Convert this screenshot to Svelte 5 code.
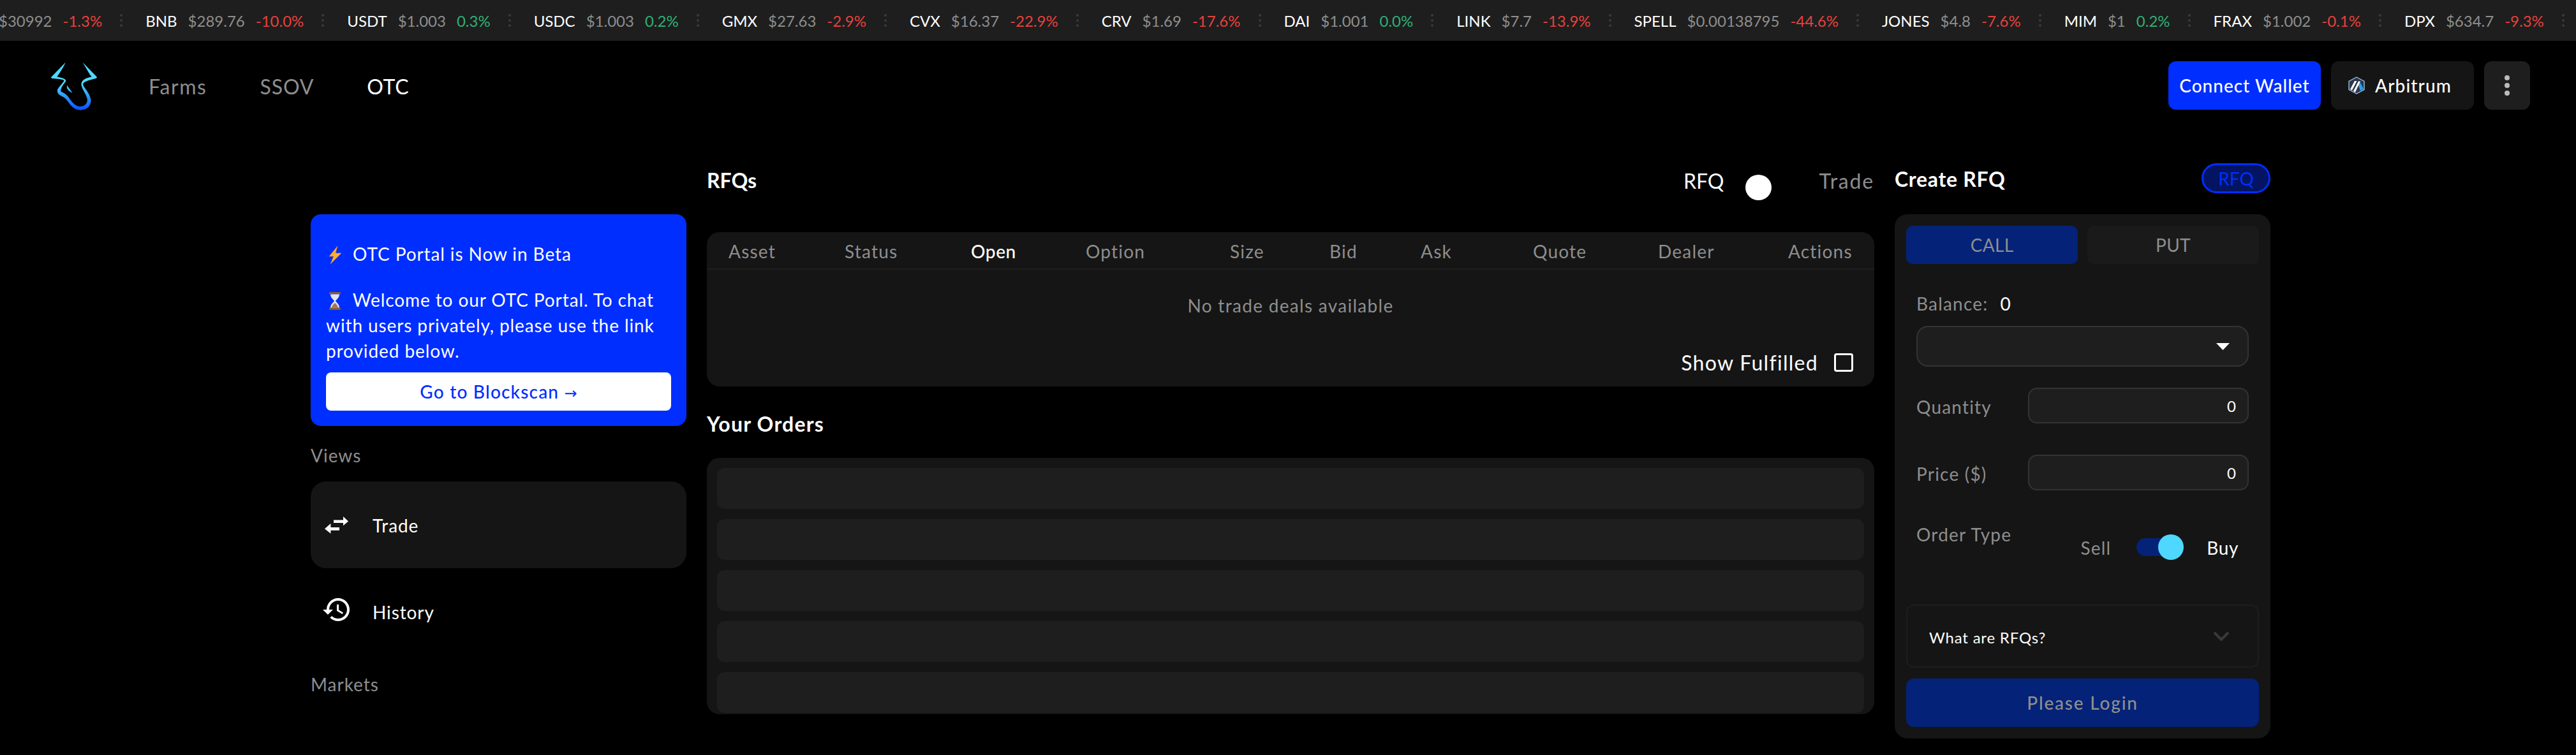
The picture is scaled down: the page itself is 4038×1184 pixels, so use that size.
<script>
  const ticks = [
    { s: '', p: '$30992', c: '-1.3%', up: false },
    { s: 'BNB', p: '$289.76', c: '-10.0%', up: false },
    { s: 'USDT', p: '$1.003', c: '0.3%', up: true },
    { s: 'USDC', p: '$1.003', c: '0.2%', up: true },
    { s: 'GMX', p: '$27.63', c: '-2.9%', up: false },
    { s: 'CVX', p: '$16.37', c: '-22.9%', up: false },
    { s: 'CRV', p: '$1.69', c: '-17.6%', up: false },
    { s: 'DAI', p: '$1.001', c: '0.0%', up: true },
    { s: 'LINK', p: '$7.7', c: '-13.9%', up: false },
    { s: 'SPELL', p: '$0.00138795', c: '-44.6%', up: false },
    { s: 'JONES', p: '$4.8', c: '-7.6%', up: false },
    { s: 'MIM', p: '$1', c: '0.2%', up: true },
    { s: 'FRAX', p: '$1.002', c: '-0.1%', up: false },
    { s: 'DPX', p: '$634.7', c: '-9.3%', up: false }
  ];
  const cols = ['Asset', 'Status', 'Open', 'Option', 'Size', 'Bid', 'Ask', 'Quote', 'Dealer', 'Actions'];
  const rows = [1, 2, 3, 4, 5];
</script>

<div class="page">
  <div class="ticker">
    {#each ticks as t}
      <div class="tick">
        {#if t.s}<span class="sym">{t.s}</span>{/if}
        <span class="price">{t.p}</span>
        <span class={t.up ? 'up' : 'down'}>{t.c}</span>
      </div>
      <svg class="sep" width="4" height="20" viewBox="0 0 4 20"><circle cx="2" cy="2" r="2" /><circle cx="2" cy="10" r="2" /><circle cx="2" cy="18" r="2" /></svg>
    {/each}
  </div>

  <header class="top">
    <div class="brand">
      <svg class="logo" width="73" height="76" viewBox="120 80 218 227">
        <defs>
          <linearGradient id="lg" x1="0" y1="0" x2="0" y2="1">
            <stop offset="0.45" stop-color="#4fd8ff" />
            <stop offset="1" stop-color="#0a4fff" />
          </linearGradient>
        </defs>
        <path fill="url(#lg)" d="M188 82 L122 150 Q118 157 126 158 C150 160 172 162 180 166 C184 172 158 195 151 208 C146 222 153 232 165 238 C180 245 190 252 200 267 C215 292 235 306 258 306 C292 305 310 282 306 255 C301 225 277 205 270 188 C268 175 285 170 330 158 Q338 154 332 148 L268 82 C285 110 298 135 310 150 C278 157 260 165 262 190 C268 215 288 235 290 258 C290 278 275 290 255 289 C237 289 222 273 207 253 C197 238 187 228 167 220 C162 212 172 192 189 172 C192 160 175 155 148 150 C165 125 178 105 188 82 Z" />
        <path fill="#3dbcff" d="M195 190 L220 225 C205 220 190 208 195 190 Z" />
      </svg>
      <nav class="nav">
        <span class="navlink farms">Farms</span>
        <span class="navlink">SSOV</span>
        <span class="navlink on">OTC</span>
      </nav>
    </div>
    <div class="actions">
      <button class="connect">Connect Wallet</button>
      <button class="network">
        <svg width="26" height="28" viewBox="0 0 26 28">
          <path d="M13 1 L25 7.5 V20.5 L13 27 L1 20.5 V7.5 Z" fill="#2d374b" stroke="#96bedc" stroke-width="1.4" />
          <path d="M14.5 10 L18 8 L24 19.5 L19 22.5 Z" fill="#28a0f0" />
          <path d="M3 20 L10 7 H13.5 L6 21.6 Z M8 23 L16 7.5 H19 L11 24.5 Z" fill="#fff" />
        </svg>
        <span>Arbitrum</span>
      </button>
      <button class="more" aria-label="More">
        <svg width="8" height="32" viewBox="0 0 8 32"><circle cx="4" cy="4" r="4" /><circle cx="4" cy="16" r="4" /><circle cx="4" cy="28" r="4" /></svg>
      </button>
    </div>
  </header>

  <main class="main">
    <aside class="side">
      <div class="banner">
        <p class="bline first">
          <svg class="emo" width="22" height="28" viewBox="0 0 22 28"><path d="M15 0 L2 16 H9 L4 28 L21 11 H12 Z" fill="#ffb02e" stroke="#f57c00" stroke-width="0.6" /></svg>
          OTC Portal is Now in Beta
        </p>
        <p class="bline">
          <svg class="emo" width="22" height="28" viewBox="0 0 22 28">
            <rect x="2" y="0" width="18" height="3.5" rx="1" fill="#8a5a3c" />
            <rect x="2" y="24.5" width="18" height="3.5" rx="1" fill="#8a5a3c" />
            <path d="M4 3.5 H18 C18 9 13 12 12 14 C13 16 18 19 18 24.5 H4 C4 19 9 16 10 14 C9 12 4 9 4 3.5 Z" fill="#dfe6ee" />
            <path d="M6 24.5 C7 20 10 18 11 17 C12 18 15 20 16 24.5 Z" fill="#a87452" />
          </svg>
          Welcome to our OTC Portal. To chat with users privately, please use the link provided below.
        </p>
        <button class="scan">Go to Blockscan <span class="arrow">→</span></button>
      </div>

      <div class="label views">Views</div>
      <div class="item active">
        <svg class="swap" width="37" height="27" viewBox="0 0 37 27" fill="#fff">
          <path d="M14 5.5 H29 V0 L37 7.6 L29 14.3 V10 H14 Z" />
          <path d="M23 17 H9.4 V11 L0 19.3 L9.4 26.7 V21.7 H23 Z" />
        </svg>
        <span class="itemtext">Trade</span>
      </div>
      <div class="item">
        <svg class="hist" width="48" height="48" viewBox="0 0 24 24" fill="#fff"><path d="M13 3c-4.97 0-9 4.03-9 9H1l3.89 3.89.07.14L9 12H6c0-3.87 3.13-7 7-7s7 3.13 7 7-3.13 7-7 7c-1.93 0-3.68-.79-4.94-2.06l-1.42 1.42C8.27 19.99 10.51 21 13 21c4.97 0 9-4.03 9-9s-4.03-9-9-9zm-1 5v5l4.28 2.54.72-1.21-3.5-2.08V8H12z" /></svg>
        <span class="itemtext">History</span>
      </div>
      <div class="label markets">Markets</div>
    </aside>

    <section class="center">
      <div class="headrow">
        <h2>RFQs</h2>
        <div class="mode">
          <span class="modeon">RFQ</span>
          <span class="knob"></span>
          <span class="modeoff">Trade</span>
        </div>
      </div>

      <div class="table">
        <div class="thead">
          {#each cols as c}
            <span class:open={c === 'Open'}>{c}</span>
          {/each}
        </div>
        <div class="empty">No trade deals available</div>
        <div class="fulfilled">
          <span>Show Fulfilled</span>
          <span class="check"></span>
        </div>
      </div>

      <h2 class="orders-title">Your Orders</h2>
      <div class="orders">
        {#each rows as r}
          <div class="skeleton" data-row={r}></div>
        {/each}
      </div>
    </section>

    <section class="right">
      <div class="headrow rhead">
        <h2 class="ctitle">Create RFQ</h2>
        <span class="pill">RFQ</span>
      </div>
      <div class="card">
        <div class="tabs">
          <div class="tab call">CALL</div>
          <div class="tab put">PUT</div>
        </div>
        <div class="form">
          <div class="balance"><span class="flabel">Balance:</span><span class="bal">0</span></div>
          <div class="select">
            <svg width="21" height="11" viewBox="0 0 21 11"><path d="M0 0 H21 L10.5 11 Z" fill="#fff" /></svg>
          </div>
          <div class="field q">
            <span class="flabel">Quantity</span>
            <div class="input">0</div>
          </div>
          <div class="field p">
            <span class="flabel">Price ($)</span>
            <div class="input">0</div>
          </div>
          <div class="otype">
            <span class="flabel">Order Type</span>
            <div class="sw">
              <span class="flabel sell">Sell</span>
              <span class="track"><span class="thumb"></span></span>
              <span class="buy">Buy</span>
            </div>
          </div>
        </div>
        <div class="accordion">
          <span class="acctext">What are RFQs?</span>
          <svg width="26" height="16" viewBox="0 0 26 16"><path d="M2 2 L13 13 L24 2" fill="none" stroke="#3a3a3a" stroke-width="4" /></svg>
        </div>
        <button class="login">Please Login</button>
      </div>
    </section>
  </main>
</div>

<style>
  :global(body) {
    margin: 0;
    background: #000;
    font-family: Lato, "Noto Sans", sans-serif;
    color: #fff;
  }
  .page {
    width: 4038px;
    height: 1184px;
    overflow: hidden;
    background: #000;
  }
  .ticker {
    height: 64px;
    background: #1e1e1e;
    display: flex;
    align-items: center;
    margin-left: -2px;
    font-size: 24px;
    white-space: nowrap;
    overflow: hidden;
    width: 4100px;
  }
  .tick {
    display: flex;
    gap: 17px;
  }
  .sym { color: #fff; }
  .price { color: #8e8e8e; }
  .up { color: #2fb078; }
  .down { color: #e5423c; }
  .sep {
    fill: #3a3a3a;
    margin: 0 36px 0 28px;
    flex: none;
  }

  .top {
    height: 140px;
    padding: 32px 72px 0 80px;
    box-sizing: border-box;
    display: flex;
    justify-content: space-between;
    align-items: flex-start;
  }
  .brand { display: flex; align-items: flex-start; }
  .logo { display: block; margin-top: 1px; }
  .nav {
    display: flex;
    gap: 83px;
    margin-left: 80px;
    height: 76px;
    align-items: center;
    font-size: 32px;
    letter-spacing: 0.8px;
    padding-top: 3px;
    box-sizing: border-box;
  }
  .navlink { color: #8e8e8e; }
  .navlink.farms { letter-spacing: 1.6px; }
  .navlink.on { color: #fff; }
  .actions { display: flex; gap: 16px; }
  button {
    font-family: inherit;
    border: 0;
    color: #fff;
    cursor: pointer;
    padding: 0;
  }
  .connect {
    width: 239px;
    height: 76px;
    border-radius: 12px;
    background: #002eff;
    font-size: 28px;
    font-weight: 500;
    letter-spacing: 1px;
  }
  .network {
    width: 224px;
    height: 76px;
    border-radius: 12px;
    background: #151515;
    font-size: 28px;
    font-weight: 500;
    letter-spacing: 1.1px;
    display: flex;
    align-items: center;
    justify-content: center;
    gap: 16px;
    padding-right: 8px;
    box-sizing: border-box;
  }
  .more {
    width: 72px;
    height: 76px;
    border-radius: 12px;
    background: #1e1e1e;
    display: flex;
    align-items: center;
    justify-content: center;
    fill: #bbb;
  }

  .main {
    display: flex;
    gap: 32px;
    align-items: flex-start;
    padding: 52px 0 0 487px;
  }
  .side { width: 589px; margin-top: 80px; flex: none; }
  .banner {
    background: #002eff;
    border-radius: 16px;
    height: 332px;
    box-sizing: border-box;
    padding: 42px 24px 24px 24px;
    display: flex;
    flex-direction: column;
  }
  .bline {
    margin: 0;
    font-size: 28px;
    line-height: 40px;
    letter-spacing: 0.9px;
  }
  .bline.first { margin-bottom: 32px; }
  .emo { vertical-align: -5px; margin: 0 9px 0 3px; }
  .scan {
    margin-top: auto;
    height: 60px;
    width: 541px;
    border-radius: 8px;
    background: #fff;
    color: #002eff;
    font-size: 28px;
    font-weight: 500;
    letter-spacing: 1.2px;
  }
  .arrow { font-family: "DejaVu Sans", sans-serif; font-size: 24px; letter-spacing: 0; }
  .label { color: #8e8e8e; font-size: 28px; line-height: 40px; letter-spacing: 1px; }
  .views { margin-top: 26px; margin-bottom: 21px; }
  .markets { margin-top: 26px; }
  .item {
    height: 136px;
    border-radius: 24px;
    display: flex;
    align-items: center;
  }
  .item.active { background: #151515; }
  .swap { margin-left: 22px; margin-right: 38px; flex: none; }
  .hist { margin-left: 17px; margin-right: 32px; flex: none; margin-top: -6px; }
  .itemtext { font-size: 28px; letter-spacing: 0.9px; padding-top: 2px; }

  .center { width: 1830px; flex: none; }
  .headrow {
    height: 54px;
    display: flex;
    justify-content: space-between;
    align-items: center;
  }
  h2 {
    margin: 0;
    font-size: 32px;
    font-weight: 700;
    line-height: 40px;
  }
  .mode { display: flex; align-items: center; font-size: 32px; }
  .modeon { color: #fff; }
  .modeoff { color: #8e8e8e; letter-spacing: 1.8px; }
  .knob {
    width: 41px;
    height: 40px;
    border-radius: 50%;
    background: #fff;
    margin: 22px 75px 0 33px;
  }
  .table {
    margin-top: 54px;
    height: 242px;
    background: #151515;
    border-radius: 20px;
    display: flex;
    flex-direction: column;
  }
  .thead {
    height: 59px;
    box-sizing: border-box;
    border-bottom: 2px solid #1e1e1e;
    padding: 3px 0 0 34px;
    display: grid;
    grid-template-columns: 182px 198px 180px 226px 156px 143px 176px 196px 204px auto;
    align-items: center;
    font-size: 28px;
    letter-spacing: 1.2px;
    color: #8e8e8e;
  }
  .thead .open { color: #fff; font-weight: 500; letter-spacing: 0.6px; }
  .empty {
    text-align: center;
    font-size: 28px;
    letter-spacing: 1.3px;
    color: #8e8e8e;
    margin-top: 36px;
    line-height: 40px;
  }
  .fulfilled {
    display: flex;
    justify-content: flex-end;
    align-items: center;
    gap: 25px;
    font-size: 32px;
    letter-spacing: 1.3px;
    padding-right: 33px;
    margin-top: 50px;
  }
  .check {
    width: 30px;
    height: 29px;
    border: 3px solid #fff;
    border-radius: 4px;
    box-sizing: border-box;
  }
  .orders-title { margin-top: 39px; letter-spacing: 1.2px; }
  .orders {
    margin-top: 33px;
    background: #151515;
    border-radius: 20px;
    padding: 16px 16px 2px 16px;
    display: flex;
    flex-direction: column;
    gap: 16px;
  }
  .skeleton {
    height: 64px;
    border-radius: 12px;
    background: #1e1e1e;
  }

  .right { width: 589px; flex: none; }
  .rhead { height: 47px; }
  .ctitle { letter-spacing: 0.7px; padding-top: 3px; }
  .pill {
    width: 108px;
    height: 47px;
    box-sizing: border-box;
    border: 3px solid #002eff;
    border-radius: 24px;
    background: #021462;
    color: #002eff;
    font-size: 28px;
    display: flex;
    align-items: center;
    justify-content: center;
  }
  .card {
    margin-top: 33px;
    height: 822px;
    box-sizing: border-box;
    background: #151515;
    border-radius: 20px;
    padding: 18px;
    display: flex;
    flex-direction: column;
  }
  .tabs { display: flex; gap: 15px; }
  .tab {
    width: 269px;
    height: 60px;
    border-radius: 10px;
    display: flex;
    align-items: center;
    justify-content: center;
    font-size: 28px;
    letter-spacing: 0.3px;
    color: #8e8e8e;
  }
  .call { background: #042277; }
  .put { background: #1a1a1a; }
  .form {
    padding: 0 16px;
    height: 535px;
  }
  .balance {
    display: flex;
    gap: 19px;
    margin-top: 42px;
    line-height: 40px;
    font-size: 28px;
  }
  .flabel { color: #8e8e8e; font-size: 28px; letter-spacing: 1.2px; }
  .field .flabel { padding-top: 3px; }
  .bal { color: #fff; }
  .select {
    margin-top: 15px;
    height: 64px;
    box-sizing: border-box;
    border: 2px solid #333;
    border-radius: 18px;
    background: #1e1e1e;
    display: flex;
    align-items: center;
    justify-content: flex-end;
    padding-right: 28px;
  }
  .field {
    display: flex;
    align-items: center;
    justify-content: space-between;
  }
  .field.q { margin-top: 33px; }
  .field.p { margin-top: 49px; }
  .input {
    width: 346px;
    height: 56px;
    box-sizing: border-box;
    border: 2px solid #333;
    border-radius: 14px;
    background: #1e1e1e;
    font-size: 24px;
    display: flex;
    align-items: center;
    justify-content: flex-end;
    padding-right: 18px;
  }
  .otype {
    display: flex;
    justify-content: space-between;
    align-items: flex-start;
    margin-top: 52px;
  }
  .sw {
    display: flex;
    align-items: center;
    margin-top: 18px;
    padding-right: 16px;
  }
  .sell { padding-top: 3px; }
  .track {
    width: 70px;
    height: 28px;
    border-radius: 14px;
    background: #042277;
    margin: 0 40px;
    position: relative;
    display: block;
  }
  .thumb {
    position: absolute;
    right: -4px;
    top: -6px;
    width: 40px;
    height: 40px;
    border-radius: 50%;
    background: #4fd8ff;
  }
  .buy { font-size: 28px; letter-spacing: 0.6px; padding-top: 3px; }
  .accordion {
    height: 99px;
    box-sizing: border-box;
    border: 2px solid #1e1e1e;
    border-radius: 12px;
    display: flex;
    align-items: center;
    justify-content: space-between;
    padding: 0 44px 0 34px;
    font-size: 24px;
    letter-spacing: 0.8px;
  }
  .acctext { padding-top: 3px; }
  .login {
    margin-top: 17px;
    height: 76px;
    border-radius: 12px;
    background: #042277;
    color: #8e8e8e;
    font-size: 28px;
    font-weight: 500;
    letter-spacing: 1.8px;
    flex: none;
  }
</style>
